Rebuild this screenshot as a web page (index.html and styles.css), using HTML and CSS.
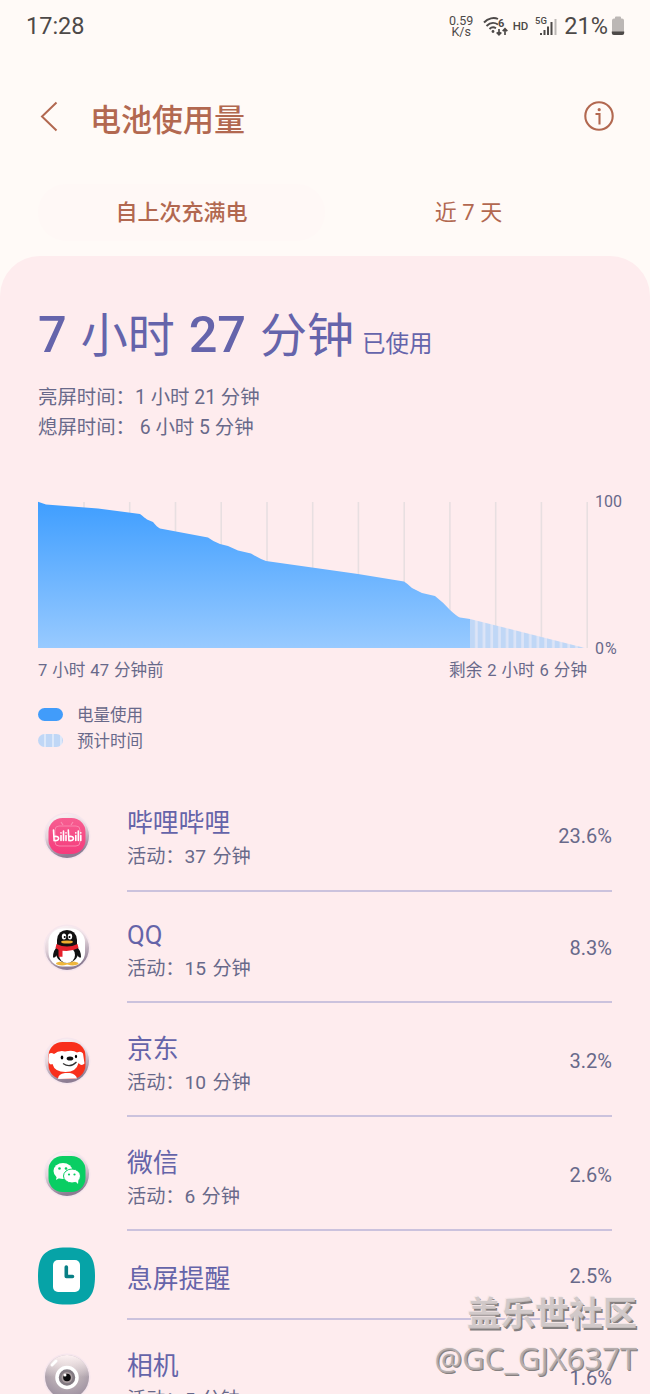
FILE: index.html
```html
<!DOCTYPE html>
<html lang="zh-CN">
<head>
  <meta charset="UTF-8">
  <meta name="viewport" content="width=device-width, initial-scale=1.0">
  <title>电池使用量</title>
  <link rel="stylesheet" href="styles.css">
</head>
<body>
  <div class="status-bar">
    <span class="time">17:28</span>
    <div class="status-icons">
      <span class="speed">0.59<br>K/s</span>
      <svg class="wifi" width="26" height="22" viewBox="0 0 26 22" fill="none" stroke="#4d4948" stroke-width="1.9">
        <path d="M1 7.500C5 3 11 2 15 4M3.500 11C7 7.500 11 7 15 9.500M6.500 14C8.500 12 11 12 13 13.200"/>
        <circle cx="10" cy="16.500" r="1.400" fill="#4d4948" stroke="none"/>
        <path d="M16 14v5.500M13.700 17.300L16 19.700l2.300-2.400M22 20v-6M19.700 16.200L22 13.800l2.300 2.400" stroke-width="1.700"/>
        <text x="15" y="11.500" class="wifi-num">6</text>
      </svg>
      <span class="hd">HD</span>
      <svg class="signal" width="23" height="22" viewBox="0 0 23 22" fill="#4d4948">
        <text x="0" y="9" class="net">5G</text>
        <rect x="5" y="18" width="2" height="2"/>
        <rect x="8.500" y="15" width="2" height="5"/>
        <rect x="12" y="11.500" width="2" height="8.500"/>
        <rect x="15.500" y="7" width="2" height="13"/>
        <rect x="19.500" y="4" width="2" height="16" fill="#bcb7b5"/>
      </svg>
      <span class="percent">21%</span>
      <svg class="battery" width="14" height="20" viewBox="0 0 14 20">
        <path d="M4 1.500Q4 .5 5 .5h4q1 0 1 1v1h1q2 0 2 2V16H1V4.500q0-2 2-2h1z" fill="#bcb7b5"/>
        <path d="M.8 15.500h12.400V17q0 2-2 2H2.800q-2 0-2-2z" fill="#4d4948"/>
      </svg>
    </div>
  </div>

  <div class="header">
    <svg class="back" width="20" height="32" viewBox="0 0 20 32" fill="none" stroke="#b26850" stroke-width="2">
      <path d="M17.500 2.500L3 16.500l14.500 14"/>
    </svg>
    <h1>电池使用量</h1>
    <svg class="info" width="32" height="32" viewBox="0 0 32 32" fill="none" stroke="#b26850" stroke-width="2.100">
      <circle cx="16" cy="16" r="13.700"/>
      <path d="M12.500 14H16.500v10.500"/>
      <circle cx="16.200" cy="9.700" r="1.600" fill="#b26850" stroke="none"/>
    </svg>
  </div>

  <div class="tabs">
    <div class="tab active">自上次充满电</div>
    <div class="tab">近 7 天</div>
  </div>

  <div class="panel">
    <div class="total"><b>7</b> 小时 <b>27</b> 分钟<small>已使用</small></div>
    <div class="details">
      <div>亮屏时间：1 小时 21 分钟</div>
      <div>熄屏时间： 6 小时 5 分钟</div>
    </div>

    <div class="chart">
      <svg width="551" height="148" viewBox="0 0 551 148">
        <defs>
          <linearGradient id="usage" x1="0" y1="0" x2="0" y2="1">
            <stop offset="0" stop-color="#3f9eff"/>
            <stop offset="1" stop-color="#98caff"/>
          </linearGradient>
          <pattern id="stripes" x="432" width="7.700" height="148" patternUnits="userSpaceOnUse">
            <rect width="7.700" height="148" fill="#dce4f7"/>
            <rect x="-0.500" width="5.500" height="148" fill="#c0d7f6"/>
          </pattern>
        </defs>
        <path d="M46 1v146M91.700 1v146M137.500 1v146M183.200 1v146M229 1v146M274.700 1v146M320.400 1v146M366.200 1v146M411.900 1v146M457.700 1v146M503.400 1v146M549.200 1v146" stroke="#e8dfe1" stroke-width="1.600"/>
        <path class="area" d="M0 .8L8 3.500L60 7.500L102 13Q107 17 109 18.500L115 21Q119 26 122 27.500L170 36.500Q176 41 182 43L190 45L200 49.500L213 52.500Q222 58 228 60L320 73L366 80.500Q370 83 374 87L384 92L397 95Q406 102 412 109Q419 115.500 422 116.500L432 118V147H0z" fill="url(#usage)"/>
        <path d="M432 118L547 147H432z" fill="url(#stripes)"/>
      </svg>
      <div class="scale">
        <span>100</span>
        <span class="zero">0%</span>
      </div>
    </div>
    <div class="chart-labels">
      <span>7 小时 47 分钟前</span>
      <span>剩余 2 小时 6 分钟</span>
    </div>

    <div class="legend">
      <div><i class="used"></i>电量使用</div>
      <div><i class="expected"></i>预计时间</div>
    </div>

    <div class="apps">
      <div class="app bili">
        <svg class="icon" width="58" height="58" viewBox="0 0 58 58">
          <defs>
            <linearGradient id="ring" x1="0" y1="0" x2=".3" y2="1">
              <stop offset="0" stop-color="#fff9f9"/>
              <stop offset=".5" stop-color="#e4d5dc"/>
              <stop offset="1" stop-color="#8d7d93"/>
            </linearGradient>
            <linearGradient id="pink" x1="0" y1="0" x2="0" y2="1">
              <stop offset="0" stop-color="#f75e91"/>
              <stop offset="1" stop-color="#f53b7c"/>
            </linearGradient>
          </defs>
          <circle cx="29" cy="29" r="23.500" fill="#f6e6ed"/>
          <circle cx="29" cy="29" r="22" fill="url(#ring)"/>
          <rect x="10.500" y="11" width="37" height="36" rx="14" fill="url(#pink)"/>
          <path d="M23 15l2 3M35 15l-2 3" stroke="#fa8bb0" stroke-width="1.200"/>
          <rect x="17" y="19" width="25" height="20" rx="4" fill="none" stroke="#f986ad"/>
          <g fill="none" stroke="#fff" stroke-width="1.600" stroke-linecap="round">
            <path d="M15.500 23l.6 10.500q4.500.5 4.500-2t-4-2M23 28.500v5M25.500 24v9.500M28 28.500v5M30.300 23l.6 10.500q4.500.5 4.500-2t-4-2M37.800 28.500v5M40.300 24v9.500M42.800 28.500v5"/>
            <path d="M23 25.800v.1M28 25.800v.1M37.800 25.800v.1M42.800 25.800v.1"/>
          </g>
        </svg>
        <div class="text"><div class="name">哔哩哔哩</div><div class="active-time">活动：37 分钟</div></div>
        <div class="value">23.6%</div>
      </div>

      <div class="app qq">
        <svg class="icon" width="58" height="58" viewBox="0 0 58 58">
          <circle cx="29" cy="29" r="23.500" fill="#f6e6ed"/>
          <circle cx="29" cy="29" r="22" fill="url(#ring)"/>
          <rect x="10.500" y="9.500" width="36.500" height="38" rx="14" fill="#fff"/>
          <ellipse cx="24" cy="44.500" rx="6" ry="1.900" fill="#efb73c"/>
          <ellipse cx="34.500" cy="44.500" rx="6" ry="1.900" fill="#efb73c"/>
          <path d="M20 27Q15 31 15 38q1 2 4-2zM38 27q5 4 5 11-1 2-4-2z" fill="#111"/>
          <ellipse cx="29" cy="34" rx="11" ry="10" fill="#111"/>
          <path d="M19 27V21q1-10 10-10t10 10v6z" fill="#111"/>
          <ellipse cx="29" cy="36" rx="8" ry="8" fill="#fff"/>
          <ellipse cx="26" cy="17.500" rx="2.200" ry="3" fill="#fff"/>
          <ellipse cx="32" cy="17.500" rx="2.200" ry="3" fill="#fff"/>
          <circle cx="26.700" cy="18" r="1"/>
          <circle cx="31.500" cy="18" r="1"/>
          <ellipse cx="29" cy="23" rx="6" ry="1.600" fill="#f0ad2f"/>
          <path d="M18.500 25q10.500 5 21 0l1 4q-6 3-12 3v0l-4-.3v6h-4v-7l-3-1.700z" fill="#e5212c"/>
        </svg>
        <div class="text"><div class="name">QQ</div><div class="active-time">活动：15 分钟</div></div>
        <div class="value">8.3%</div>
      </div>

      <div class="app jd">
        <svg class="icon" width="58" height="58" viewBox="0 0 58 58">
          <circle cx="29" cy="29" r="23.500" fill="#f6e6ed"/>
          <circle cx="29" cy="29" r="22" fill="url(#ring)"/>
          <rect x="10.500" y="10" width="37" height="37" rx="14" fill="#f8301c"/>
          <path d="M20 47q0-5 7-6h5q6 1 7 5.500z" fill="#fff"/>
          <path d="M11 22q2-2 5 0Q21 18 27 19.500q8-2 12 1 4-2 6 1l1.500 10q-3 3-6-.5-2 9-13 9-11 0-13-8-4 2-4-5z" fill="#fff"/>
          <ellipse cx="32" cy="26.500" rx="3.300" ry="2" fill="#111"/>
          <ellipse cx="24" cy="25.500" rx="1.300" ry="2"/>
          <ellipse cx="38" cy="24.500" rx="1.100" ry="1.800"/>
          <path d="M25 31.500q7 5 13.500-1.500" fill="none" stroke="#333" stroke-width="1.200"/>
        </svg>
        <div class="text"><div class="name">京东</div><div class="active-time">活动：10 分钟</div></div>
        <div class="value">3.2%</div>
      </div>

      <div class="app wechat">
        <svg class="icon" width="58" height="58" viewBox="0 0 58 58">
          <circle cx="29" cy="29" r="23.500" fill="#f6e6ed"/>
          <circle cx="29" cy="29" r="22" fill="url(#ring)"/>
          <rect x="10.500" y="11" width="37" height="36" rx="14" fill="#09ce63"/>
          <path d="M19 30l-1 5 5-3z" fill="#fff"/>
          <ellipse cx="25" cy="26" rx="9.500" ry="8" fill="#fff"/>
          <ellipse cx="34" cy="31" rx="8.500" ry="7" fill="#fff" stroke="#09ce63"/>
          <path d="M37 36l3 3 .5-5z" fill="#fff"/>
          <g fill="#09ce63">
            <circle cx="21.500" cy="23.500" r="1.300"/><circle cx="28" cy="23.500" r="1.300"/>
            <circle cx="31" cy="29.500" r="1.100"/><circle cx="36.500" cy="29.500" r="1.100"/>
          </g>
        </svg>
        <div class="text"><div class="name">微信</div><div class="active-time">活动：6 分钟</div></div>
        <div class="value">2.6%</div>
      </div>

      <div class="app aod">
        <svg class="icon" width="58" height="58" viewBox="0 0 58 58">
          <path d="M28.500 .5C49.500 .5 57 8 57 29S49.500 57.500 28.500 57.500 0 50 0 29 7.500 .5 28.500 .5z" fill="#06a3a7"/>
          <rect x="15" y="13" width="27" height="32" rx="5" fill="#fff"/>
          <path d="M28.300 20v9.500H34.500" fill="none" stroke="#087f85" stroke-width="3.600" stroke-linecap="round" stroke-linejoin="round"/>
        </svg>
        <div class="text"><div class="name">息屏提醒</div></div>
        <div class="value">2.5%</div>
      </div>

      <div class="app camera">
        <svg class="icon" width="58" height="58" viewBox="0 0 58 58">
          <defs>
            <radialGradient id="ball" cx=".5" cy=".3" r=".7">
              <stop offset="0" stop-color="#d2c6c9"/>
              <stop offset=".55" stop-color="#b9adb4"/>
              <stop offset="1" stop-color="#9d90a0"/>
            </radialGradient>
            <linearGradient id="shine" x1="0" y1="0" x2="0" y2="1">
              <stop offset="0" stop-color="#fff3f3"/>
              <stop offset=".5" stop-color="#fff3f3" stop-opacity="0"/>
            </linearGradient>
          </defs>
          <circle cx="29" cy="29" r="23.500" fill="#f6e6ed"/>
          <circle cx="29" cy="29" r="22" fill="url(#ball)"/>
          <circle cx="29" cy="29" r="22" fill="url(#shine)"/>
          <path d="M14 17l4-4" stroke="#fff" stroke-width="3" stroke-linecap="round"/>
          <circle cx="29" cy="29.500" r="10" fill="#827a82" stroke="#fff" stroke-width="3.500"/>
          <circle cx="29" cy="29.500" r="5.500" fill="#a99da0"/>
          <circle cx="29" cy="29.500" r="3.800" fill="#0b0a0c"/>
          <circle cx="27" cy="27" r="1.500" fill="#fff"/>
        </svg>
        <div class="text"><div class="name">相机</div><div class="active-time">活动：5 分钟</div></div>
        <div class="value">1.6%</div>
      </div>
    </div>
  </div>

  <div class="watermark">
    <div class="community">盖乐世社区</div>
    <div class="user">@GC_GJX637T</div>
  </div>
</body>
</html>
```
FILE: styles.css
```css
* {
  box-sizing: border-box;
}
body {
  margin: 0;
  position: relative;
  height: 1394px;
  overflow: hidden;
  background-color: #fffaf7;
  font-family: Roboto, "Noto Sans CJK SC", sans-serif;
  color: #68698a;
}
.status-bar {
  display: flex;
  justify-content: space-between;
  align-items: center;
  height: 52px;
  padding: 0 25px 0 26px;
  color: #4d4948;
}
.time {
  font-size: 23.500px;
}
.status-icons {
  display: flex;
  align-items: center;
}
.speed {
  width: 27px;
  margin-right: 8px;
  font-size: 12.500px;
  line-height: 11.500px;
  text-align: center;
}
.wifi-num {
  font-size: 11px;
  font-weight: bold;
  fill: #4d4948;
  stroke: none;
}
.hd {
  margin: 0 7px 0 4px;
  font-size: 11.500px;
  font-weight: 500;
}
.net {
  font-size: 9.500px;
  font-weight: 500;
}
.percent {
  margin: 0 3px 0 6px;
  font-size: 23.500px;
}
.header {
  display: flex;
  align-items: center;
  height: 128px;
  padding: 0 35px 0 39px;
}
.back {
  margin-right: 31px;
}
.header h1 {
  flex: 1;
  margin: 0;
  padding-top: 2px;
  font-size: 31px;
  font-weight: 500;
  color: #b26850;
}
.tabs {
  display: flex;
  height: 76px;
  padding: 4px 38px 0;
}
.tab {
  flex: 1;
  height: 57px;
  border-radius: 28px;
  font-size: 22px;
  line-height: 58px;
  text-align: center;
  color: #b26850;
}
.tab.active {
  background-color: #fff8f6;
  font-weight: 500;
}
.panel {
  height: 1138px;
  padding: 43px 38px 0;
  border-radius: 40px 40px 0 0;
  background-color: #feecee;
}
.total {
  height: 72px;
  font-size: 47px;
  line-height: 72px;
  word-spacing: 2.300px;
  white-space: nowrap;
  color: #6564ab;
}
.total b {
  font-size: 50.500px;
  font-weight: 500;
}
.total small {
  margin-left: 8px;
  font-size: 23.500px;
}
.details {
  margin-top: 12px;
  font-size: 19.400px;
  line-height: 30px;
}
.chart {
  display: flex;
  width: 600px;
  margin-top: 58px;
}
.scale {
  display: flex;
  flex-direction: column;
  justify-content: space-between;
  height: 165px;
  margin: -8px 0 -9px 6px;
  font-size: 16px;
  line-height: 18px;
}
.zero {
  letter-spacing: 1px;
}
.chart-labels {
  display: flex;
  justify-content: space-between;
  width: 549px;
  margin-top: 9px;
  font-size: 16.600px;
  line-height: 26px;
  word-spacing: .8px;
}
.legend {
  margin-top: 19px;
  font-size: 16.500px;
  line-height: 26px;
}
.legend div {
  display: flex;
  align-items: center;
}
.legend i {
  width: 25px;
  height: 13px;
  margin: -4px 14px 0 0;
  border-radius: 7px;
}
.used {
  background-color: #419cfa;
}
.expected {
  background: repeating-linear-gradient(90deg, #c0d7f6 0, #c0d7f6 6px, #dce8fa 6px, #dce8fa 8px);
}
.apps {
  margin-top: 24px;
}
.app {
  display: flex;
  align-items: center;
  position: relative;
  height: 114px;
}
.icon {
  margin-right: 31px;
}
.text {
  display: flex;
  flex: 1;
  flex-direction: column;
  justify-content: center;
  height: 100%;
  padding-top: 9px;
  border-bottom: 2px solid #cbc2dd;
}
.name {
  font-size: 25.800px;
  line-height: 36px;
  color: #6564a9;
}
.active-time {
  font-size: 19.200px;
  line-height: 32px;
  word-spacing: 1.500px;
}
.value {
  align-self: stretch;
  display: flex;
  align-items: center;
  padding-top: 2px;
  border-bottom: 2px solid #cbc2dd;
  font-size: 20px;
}
.bili {
  height: 113px;
}
.qq {
  height: 111px;
}
.jd .text,
.wechat .text {
  padding-top: 12px;
}
.jd .value,
.wechat .value {
  padding-top: 4px;
}
.jd .icon {
  margin-top: 2px;
}
.aod {
  height: 89px;
}
.camera .text,
.camera .value {
  border: none;
}
.watermark {
  position: absolute;
  right: 13px;
  bottom: 14px;
  text-align: right;
  color: rgba(205, 197, 197, .9);
  text-shadow: -1px -1px 0 #f3e6e7, 1.500px 1.500px 0 #858080;
}
.community {
  font-size: 34px;
  font-weight: bold;
  line-height: 44px;
}
.user {
  font-family: "Open Sans", sans-serif;
  font-size: 31px;
  line-height: 44px;
  color: rgba(175, 166, 166, .9);
  text-shadow: -1px -1px 0 #f3e6e7, 1px 1px 0 #858080;
}
```
